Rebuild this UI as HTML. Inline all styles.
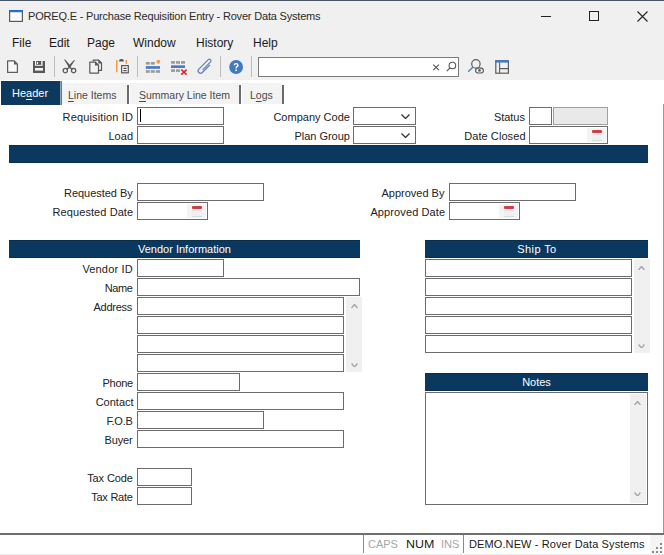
<!DOCTYPE html>
<html><head><meta charset="utf-8">
<style>
*{box-sizing:border-box;margin:0;padding:0}
html,body{width:664px;height:555px;overflow:hidden;background:#fff;font-family:"Liberation Sans",sans-serif;color:#222}
.a{position:absolute}
#titlebar{left:0;top:0;width:664px;height:33px;background:#f0f0f0;border-top:1px solid #4b5563}
#title{left:28px;top:10px;font-size:11px;letter-spacing:-0.19px;color:#2b2b2b;white-space:nowrap}
#menubar{left:0;top:33px;width:664px;height:22px;background:#f0f0f0}
.mi{font-size:12px;top:36px;color:#1a1a1a;white-space:nowrap}
#toolbar{left:0;top:55px;width:664px;height:25px;background:#f0f0f0}
.sep{width:1px;background:#bdbdbd;top:56px;height:21px}
#search{left:258px;top:57px;width:201px;height:20px;background:#fff;border:1px solid #7a7a7a}
#tabstrip{left:0;top:80px;width:664px;height:24px;background:#fff}
.tab{top:83px;height:21px;background:#f3f3f3}
.tabt{font-size:10.5px;top:89px;color:#4a4a4a;white-space:nowrap}
u{text-underline-offset:2px}
.tsep{width:2px;background:#6a6a6a;top:85px;height:19px}
#htab{left:1px;top:81px;width:60px;height:24px;background:#0e395e;border-right:1px solid #8ea7c0;box-shadow:1px 0 0 #6a7683}
.lbl{font-size:11px;color:#222;white-space:nowrap;text-align:right}
.in{height:18px;border:1px solid #6c6c6c;background:#fff}
.bar{background:#0b385e;box-shadow:inset 0 1px #0a2e4e,inset 0 -1px #0a2e4e;height:18px;color:#fff;font-size:11px;text-align:center;line-height:18px}
.sb{background:#f0f0f0}
.chev{position:absolute}
#rborder{left:663px;top:104px;width:1px;height:431px;background:#999}
#status{left:0;top:533px;width:664px;height:22px;background:#fff;border-top:2px solid #6e6e6e}
.st{font-size:11px;top:538px;white-space:nowrap}
</style></head><body>
<div id="titlebar" class="a"></div>
<!-- window icon -->
<svg class="a" style="left:9px;top:10px" width="14" height="12" viewBox="0 0 14 12"><rect x="0.6" y="0.6" width="12.8" height="10.8" fill="#fbfbfb" stroke="#5a5a5a" stroke-width="1.2"/><rect x="0" y="0" width="14" height="2.2" fill="#1f6fcf"/></svg>
<div id="title" class="a">POREQ.E - Purchase Requisition Entry - Rover Data Systems</div>
<!-- window buttons -->
<div class="a" style="left:541px;top:16px;width:10px;height:1px;background:#222"></div>
<div class="a" style="left:589px;top:11px;width:10px;height:10px;border:1px solid #222"></div>
<svg class="a" style="left:637px;top:11px" width="11" height="11" viewBox="0 0 11 11"><path d="M0.5 0.5L10.5 10.5M10.5 0.5L0.5 10.5" stroke="#222" stroke-width="1.1"/></svg>

<div id="menubar" class="a"></div>
<div class="a mi" style="left:12px">File</div>
<div class="a mi" style="left:49px">Edit</div>
<div class="a mi" style="left:87px">Page</div>
<div class="a mi" style="left:133px">Window</div>
<div class="a mi" style="left:196px">History</div>
<div class="a mi" style="left:253px">Help</div>

<div id="toolbar" class="a"></div>
<svg class="a" style="left:0;top:55px;z-index:2" width="664" height="25" viewBox="0 55 664 25">
<!-- new doc -->
<path d="M7.6 60.9H14.2L17.4 64.1V72.4H7.6Z" fill="#f8f8f8" stroke="#5c5c5c" stroke-width="1.2" stroke-linejoin="round"/>
<path d="M14 60.6V64.4H17.8Z" fill="#5c5c5c"/>
<!-- save -->
<path d="M33 61H45V73H33Z" fill="#585858"/>
<rect x="35" y="61" width="7.6" height="4.8" fill="#f4f4f4"/>
<rect x="36.2" y="61" width="5" height="3.8" fill="#585858"/>
<rect x="37" y="62" width="1.1" height="2" fill="#f4f4f4"/>
<rect x="35" y="68" width="8" height="2.6" fill="#f4f4f4"/>
<!-- scissors -->
<path d="M63.9 59.3L65.4 59.8L71.2 66.5L69.4 68.2Z" fill="#585858"/>
<path d="M75.1 60L73.8 60.2L67.9 66.5L69.6 68.2Z" fill="#585858"/>
<path d="M69.5 67.2L66.6 69.3M69.5 67.2L72.4 69.3" stroke="#585858" stroke-width="1.3"/>
<circle cx="65.3" cy="70.6" r="2.15" fill="none" stroke="#585858" stroke-width="1.25"/>
<circle cx="73.6" cy="70.6" r="2.15" fill="none" stroke="#585858" stroke-width="1.25"/>
<!-- copy -->
<path d="M93.2 61.2V60.1H98.6L101.5 63V70.4H99" fill="none" stroke="#585858" stroke-width="1.2" stroke-linejoin="round"/>
<path d="M98.3 59.6V63.4H102.1Z" fill="#585858"/>
<path d="M89.8 62.1H95.4L98.5 65.2V73.1H89.8Z" fill="#f2f2f2" stroke="#585858" stroke-width="1.2" stroke-linejoin="round"/>
<path d="M95 61.6V65.6H99Z" fill="#585858"/>
<!-- paste -->
<path d="M116.8 60V72.3" fill="none" stroke="#ee9a3a" stroke-width="1.5"/>
<path d="M126.3 60V63.8" fill="none" stroke="#ee9a3a" stroke-width="1.5"/>
<path d="M119.2 61.6V60.4Q119.2 59 121.4 59Q123.7 59 123.7 60.4V61.6Z" fill="#585858"/>
<rect x="121.6" y="65.6" width="6.7" height="7.2" fill="#f6f6f6" stroke="#585858" stroke-width="1.2"/>
<path d="M123.4 68.4H126.6M123.4 70.6H126.6" stroke="#585858" stroke-width="1.1"/>
<!-- insert row -->
<g fill="#9a9a9a">
<rect x="145.8" y="62" width="4" height="2.6"/><rect x="150.8" y="62" width="4" height="2.6"/>
<rect x="145.8" y="70.2" width="4" height="2.6"/><rect x="150.8" y="70.2" width="4" height="2.6"/><rect x="155.8" y="70.2" width="4.2" height="2.6"/>
</g>
<rect x="145.8" y="66.1" width="14.2" height="2.7" fill="#4a7cc0"/>
<circle cx="158.3" cy="61.7" r="2" fill="#f0a040"/>
<!-- delete row -->
<g fill="#9a9a9a">
<rect x="171" y="61.1" width="4" height="2.6"/><rect x="176" y="61.1" width="4" height="2.6"/><rect x="181" y="61.1" width="4" height="2.6"/>
<rect x="171" y="69.3" width="4" height="2.6"/><rect x="176" y="69.3" width="4" height="2.6"/>
</g>
<rect x="171" y="65.3" width="14" height="2.7" fill="#4a7cc0"/>
<path d="M181.3 69.6L186.6 74.6M186.6 69.6L181.3 74.6" stroke="#e0242c" stroke-width="1.6"/>
<!-- paperclip -->
<g transform="translate(205.3 66) rotate(45)">
<path d="M0.8 4.2V-6.6A1.6 1.6 0 0 0 -2.4 -6.6V6.7A2.45 2.45 0 0 0 2.5 6.7V-3.6" fill="none" stroke="#5a7fb0" stroke-width="1.15" stroke-linecap="round"/>
</g>
<!-- help -->
<circle cx="236.1" cy="67" r="6.9" fill="#4279c0"/>
<path d="M234.3 65.3Q234.3 63.6 236.1 63.6Q237.9 63.6 237.9 65.2Q237.9 66.1 236.9 66.7Q236.1 67.2 236.1 68.4" fill="none" stroke="#fff" stroke-width="1.4"/>
<rect x="235.3" y="69.6" width="1.6" height="1.5" fill="#fff"/>
<!-- search x -->
<path d="M433.2 64.6L439 70.2M439 64.6L433.2 70.2" stroke="#555" stroke-width="1.1"/>
<!-- search mag -->
<circle cx="452.4" cy="65.5" r="3.3" fill="none" stroke="#555" stroke-width="1.1"/>
<path d="M450 67.9L446.8 71.1" stroke="#555" stroke-width="1.2"/>
<!-- search-eye -->
<circle cx="475.9" cy="63.9" r="4.2" fill="none" stroke="#5c5c5c" stroke-width="1.2"/>
<path d="M472.8 67.2L468.6 71.3" stroke="#5a7eac" stroke-width="1.5" stroke-linecap="round"/>
<ellipse cx="479.5" cy="70.4" rx="3.9" ry="2.6" fill="#f4f4f4" stroke="#5c5c5c" stroke-width="1.2"/>
<circle cx="479.5" cy="70.4" r="1.3" fill="#5c5c5c"/>
<!-- layout -->
<rect x="495.8" y="60.8" width="12.6" height="12.4" fill="none" stroke="#5c5c5c" stroke-width="1.2"/>
<rect x="495.2" y="60.2" width="13.8" height="2.4" fill="#3f79c2"/>
<path d="M499.6 62.5V73M499.6 68.6H508.4" stroke="#5c5c5c" stroke-width="1.1"/>
</svg>
<div class="a sep" style="left:54px"></div>
<div class="a sep" style="left:137px"></div>
<div class="a sep" style="left:220px"></div>
<div class="a sep" style="left:251px"></div>
<div id="search" class="a"></div>

<div id="tabstrip" class="a"></div>
<div class="a tab" style="left:62px;width:66px"></div>
<div class="a tab" style="left:130px;width:110px"></div>
<div class="a tab" style="left:242px;width:41px"></div>
<div id="htab" class="a"></div>
<div class="a tabt" style="left:12px;top:87px;color:#fff;font-size:11px">He<u>a</u>der</div>
<div class="a tabt" style="left:68px"><u>L</u>ine Items</div>
<div class="a tsep" style="left:127px"></div>
<div class="a tabt" style="left:139px"><u>S</u>ummary Line Item</div>
<div class="a tsep" style="left:239px"></div>
<div class="a tabt" style="left:250px">L<u>o</u>gs</div>
<div class="a tsep" style="left:282px"></div>

<div id="form">
<div class="a lbl" style="left:62.60px;top:108px;line-height:18px;letter-spacing:0.144px">Requisition ID</div>
<div class="a lbl" style="left:108.40px;top:127px;line-height:18px;letter-spacing:0.082px">Load</div>
<div class="a lbl" style="left:273.40px;top:108px;line-height:18px;letter-spacing:0.008px">Company Code</div>
<div class="a lbl" style="left:294.40px;top:127px;line-height:18px;letter-spacing:-0.014px">Plan Group</div>
<div class="a lbl" style="left:494.00px;top:108px;line-height:18px;letter-spacing:-0.057px">Status</div>
<div class="a lbl" style="left:464.20px;top:127px;line-height:18px;letter-spacing:0.079px">Date Closed</div>
<div class="a lbl" style="left:64.00px;top:184px;line-height:18px;letter-spacing:-0.027px">Requested By</div>
<div class="a lbl" style="left:52.60px;top:203px;line-height:18px;letter-spacing:0.078px">Requested Date</div>
<div class="a lbl" style="left:381.50px;top:184px;line-height:18px;letter-spacing:-0.008px">Approved By</div>
<div class="a lbl" style="left:370.40px;top:203px;line-height:18px;letter-spacing:0.111px">Approved Date</div>
<div class="a lbl" style="left:82.40px;top:260px;line-height:18px;letter-spacing:0.165px">Vendor ID</div>
<div class="a lbl" style="left:104.80px;top:279px;line-height:18px;letter-spacing:-0.442px">Name</div>
<div class="a lbl" style="left:93.50px;top:298px;line-height:18px;letter-spacing:-0.276px">Address</div>
<div class="a lbl" style="left:102.50px;top:374px;line-height:18px;letter-spacing:-0.272px">Phone</div>
<div class="a lbl" style="left:95.70px;top:393px;line-height:18px;letter-spacing:-0.009px">Contact</div>
<div class="a lbl" style="left:106.40px;top:412px;line-height:18px;letter-spacing:-0.292px">F.O.B</div>
<div class="a lbl" style="left:104.60px;top:431px;line-height:18px;letter-spacing:-0.143px">Buyer</div>
<div class="a lbl" style="left:87.20px;top:469px;line-height:18px;letter-spacing:-0.108px">Tax Code</div>
<div class="a lbl" style="left:91.20px;top:488px;line-height:18px;letter-spacing:-0.242px">Tax Rate</div>
<div class="a in" style="left:137px;top:107px;width:87px;height:18px"></div>
<div class="a" style="left:140px;top:109px;width:1px;height:13px;background:#000"></div>
<div class="a in" style="left:137px;top:126px;width:87px;height:18px"></div>
<div class="a in" style="left:353px;top:107px;width:63px;height:18px"></div>
<svg class="a" style="left:400.5px;top:113.5px" width="9" height="5" viewBox="0 0 9 5"><path d="M0.5 0.5L4.5 4.5L8.5 0.5" fill="none" stroke="#333" stroke-width="1.3"/></svg>
<div class="a in" style="left:353px;top:126px;width:63px;height:18px"></div>
<svg class="a" style="left:400.5px;top:132.5px" width="9" height="5" viewBox="0 0 9 5"><path d="M0.5 0.5L4.5 4.5L8.5 0.5" fill="none" stroke="#333" stroke-width="1.3"/></svg>
<div class="a in" style="left:529px;top:107px;width:23px;height:18px"></div>
<div class="a in" style="left:553px;top:107px;width:55px;height:18px;background:#e9e9e9;border-color:#a0a0a0"></div>
<div class="a in" style="left:529px;top:126px;width:79px;height:18px"></div>
<div class="a" style="left:587px;top:128px;width:19px;height:14px;background:#f4f4f4"></div>
<div class="a" style="left:592px;top:130px;width:10px;height:3px;background:#cf3f48;border-radius:1px"></div>
<div class="a" style="left:592px;top:134px;width:10px;height:7px;background:#eef0f2;border-top:1px solid #dde3e6;border-bottom:1px solid #d8dde0"></div>
<div class="a bar" style="left:9px;top:145px;width:639px"></div>
<div class="a in" style="left:137px;top:183px;width:127px;height:18px"></div>
<div class="a in" style="left:137px;top:202px;width:71px;height:18px"></div>
<div class="a" style="left:187px;top:204px;width:19px;height:14px;background:#f4f4f4"></div>
<div class="a" style="left:192px;top:206px;width:10px;height:3px;background:#cf3f48;border-radius:1px"></div>
<div class="a" style="left:192px;top:210px;width:10px;height:7px;background:#eef0f2;border-top:1px solid #dde3e6;border-bottom:1px solid #d8dde0"></div>
<div class="a in" style="left:449px;top:183px;width:127px;height:18px"></div>
<div class="a in" style="left:449px;top:202px;width:71px;height:18px"></div>
<div class="a" style="left:499px;top:204px;width:19px;height:14px;background:#f4f4f4"></div>
<div class="a" style="left:504px;top:206px;width:10px;height:3px;background:#cf3f48;border-radius:1px"></div>
<div class="a" style="left:504px;top:210px;width:10px;height:7px;background:#eef0f2;border-top:1px solid #dde3e6;border-bottom:1px solid #d8dde0"></div>
<div class="a bar" style="left:9px;top:240px;width:351px">Vendor Information</div>
<div class="a in" style="left:137px;top:259px;width:87px;height:18px"></div>
<div class="a in" style="left:137px;top:278px;width:223px;height:18px"></div>
<div class="a in" style="left:137px;top:297px;width:207px;height:18px"></div>
<div class="a in" style="left:137px;top:316px;width:207px;height:18px"></div>
<div class="a in" style="left:137px;top:335px;width:207px;height:18px"></div>
<div class="a in" style="left:137px;top:354px;width:207px;height:18px"></div>
<div class="a sb" style="left:346px;top:297px;width:16px;height:75px"></div>
<svg class="a" style="left:350.5px;top:304.25px" width="7" height="4.5" viewBox="0 0 7 4.5"><path d="M0.5 4.0L3.5 0.5L6.5 4.0" fill="none" stroke="#a8a8a8" stroke-width="1.5"/></svg>
<svg class="a" style="left:350.5px;top:362.75px" width="7" height="4.5" viewBox="0 0 7 4.5"><path d="M0.5 0.5L3.5 4.0L6.5 0.5" fill="none" stroke="#a8a8a8" stroke-width="1.5"/></svg>
<div class="a in" style="left:137px;top:373px;width:103px;height:18px"></div>
<div class="a in" style="left:137px;top:392px;width:207px;height:18px"></div>
<div class="a in" style="left:137px;top:411px;width:127px;height:18px"></div>
<div class="a in" style="left:137px;top:430px;width:207px;height:18px"></div>
<div class="a in" style="left:137px;top:468px;width:55px;height:18px"></div>
<div class="a in" style="left:137px;top:487px;width:55px;height:18px"></div>
<div class="a bar" style="left:425px;top:240px;width:223px"><span style="letter-spacing:0.4px;margin-left:1px">Ship To</span></div>
<div class="a in" style="left:425px;top:259px;width:207px;height:18px"></div>
<div class="a in" style="left:425px;top:278px;width:207px;height:18px"></div>
<div class="a in" style="left:425px;top:297px;width:207px;height:18px"></div>
<div class="a in" style="left:425px;top:316px;width:207px;height:18px"></div>
<div class="a in" style="left:425px;top:335px;width:207px;height:18px"></div>
<div class="a sb" style="left:634px;top:259px;width:16px;height:94px"></div>
<svg class="a" style="left:638.3px;top:265.75px" width="7" height="4.5" viewBox="0 0 7 4.5"><path d="M0.5 4.0L3.5 0.5L6.5 4.0" fill="none" stroke="#a8a8a8" stroke-width="1.5"/></svg>
<svg class="a" style="left:638.3px;top:343.75px" width="7" height="4.5" viewBox="0 0 7 4.5"><path d="M0.5 0.5L3.5 4.0L6.5 0.5" fill="none" stroke="#a8a8a8" stroke-width="1.5"/></svg>
<div class="a bar" style="left:425px;top:373px;width:223px">Notes</div>
<div class="a in" style="left:425px;top:392px;width:223px;height:113px"></div>
<div class="a sb" style="left:630px;top:394px;width:16px;height:109px"></div>
<svg class="a" style="left:634.1px;top:400.55px" width="7" height="4.5" viewBox="0 0 7 4.5"><path d="M0.5 4.0L3.5 0.5L6.5 4.0" fill="none" stroke="#a8a8a8" stroke-width="1.5"/></svg>
<svg class="a" style="left:634.1px;top:491.75px" width="7" height="4.5" viewBox="0 0 7 4.5"><path d="M0.5 0.5L3.5 4.0L6.5 0.5" fill="none" stroke="#a8a8a8" stroke-width="1.5"/></svg>
</div>

<div id="rborder" class="a"></div>
<div id="status" class="a"></div>
<div class="a" style="left:363px;top:535px;width:1px;height:18px;background:#8a8a8a"></div>
<div class="a st" style="left:368px;color:#a6a6a6">CAPS</div>
<div class="a st" style="left:405.5px;color:#1a1a1a;transform:scaleX(1.13);transform-origin:0 0">NUM</div>
<div class="a st" style="left:441px;color:#a6a6a6">INS</div>
<div class="a" style="left:463px;top:535px;width:1px;height:18px;background:#8a8a8a"></div>
<div class="a st" style="left:469px;color:#1a1a1a;letter-spacing:0.11px">DEMO.NEW - Rover Data Systems</div>
<div class="a" style="left:650px;top:535px;width:13px;height:20px;background:#f4f4f4"></div>
<svg class="a" style="left:651px;top:540px" width="13" height="15" viewBox="0 0 13 15"><g fill="#8a8a8a"><rect x="9" y="3" width="2" height="2"/><rect x="5" y="7" width="2" height="2"/><rect x="9" y="7" width="2" height="2"/><rect x="1" y="11" width="2" height="2"/><rect x="5" y="11" width="2" height="2"/><rect x="9" y="11" width="2" height="2"/></g></svg>
<div class="a" style="left:0;top:554px;width:664px;height:1px;background:#ececec"></div>
</body></html>
